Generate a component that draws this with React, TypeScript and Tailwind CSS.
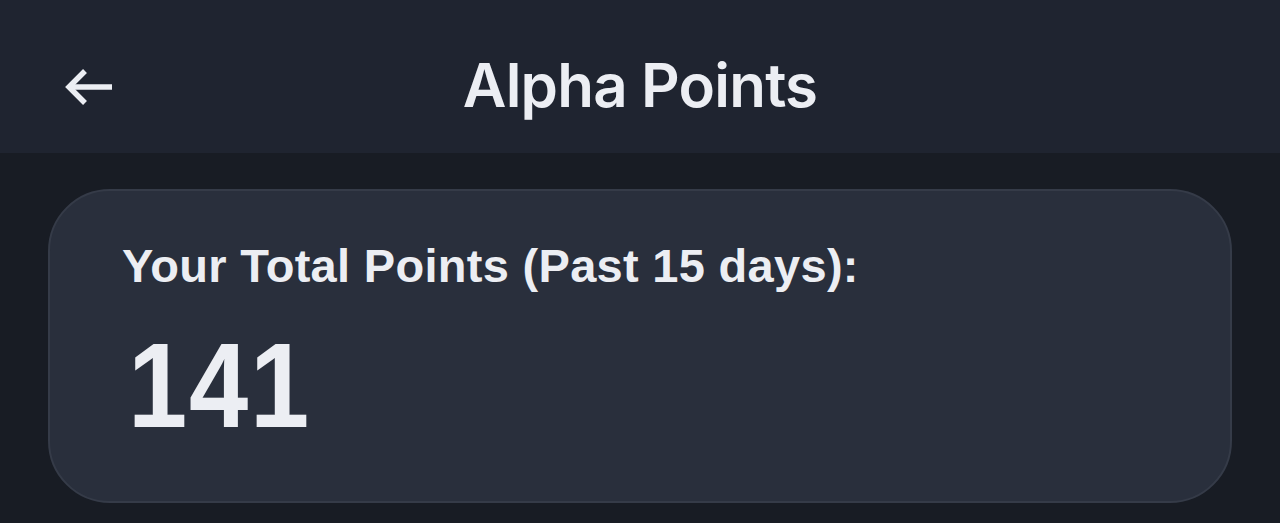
export default function App() {
  return (
    <div className="h-[523px] w-full overflow-hidden bg-[#181c24]">
      <header className="relative flex h-[153px] items-center justify-center bg-[#1f2430]">
        <button className="absolute left-[64px] top-[67px] text-[#eceef3]" aria-label="Back">
          <svg width="51" height="40" viewBox="0 0 51 40" fill="none" stroke="currentColor" strokeWidth="5.5" strokeLinecap="butt" strokeLinejoin="miter">
            <path d="M48 20H6" />
            <path d="M21 4L5 20l16 16" />
          </svg>
        </button>
        <h1 className="mt-[16px] font-['Inter',sans-serif] text-[60px] font-semibold tracking-[-0.8px] text-[#eceef3]">
          Alpha Points
        </h1>
      </header>
      <main className="px-[48px] pt-[36px]">
        <div className="h-[314px] rounded-[62px] border-2 border-[#353b48] bg-[#292f3c] pl-[72px] pt-[47px]">
          <p className="font-['Liberation_Sans',Arial,sans-serif] text-[47px] font-bold leading-[56px] tracking-[0.3px] text-[#eceef3]">
            Your Total Points (Past 15 days):
          </p>
          <p className="mt-[36px] ml-[6px] inline-block origin-left scale-x-[0.88] font-['Liberation_Sans',Arial,sans-serif] text-[121px] font-bold leading-[110px] tracking-[2px] text-[#eceef3]">
            141
          </p>
        </div>
      </main>
    </div>
  );
}
